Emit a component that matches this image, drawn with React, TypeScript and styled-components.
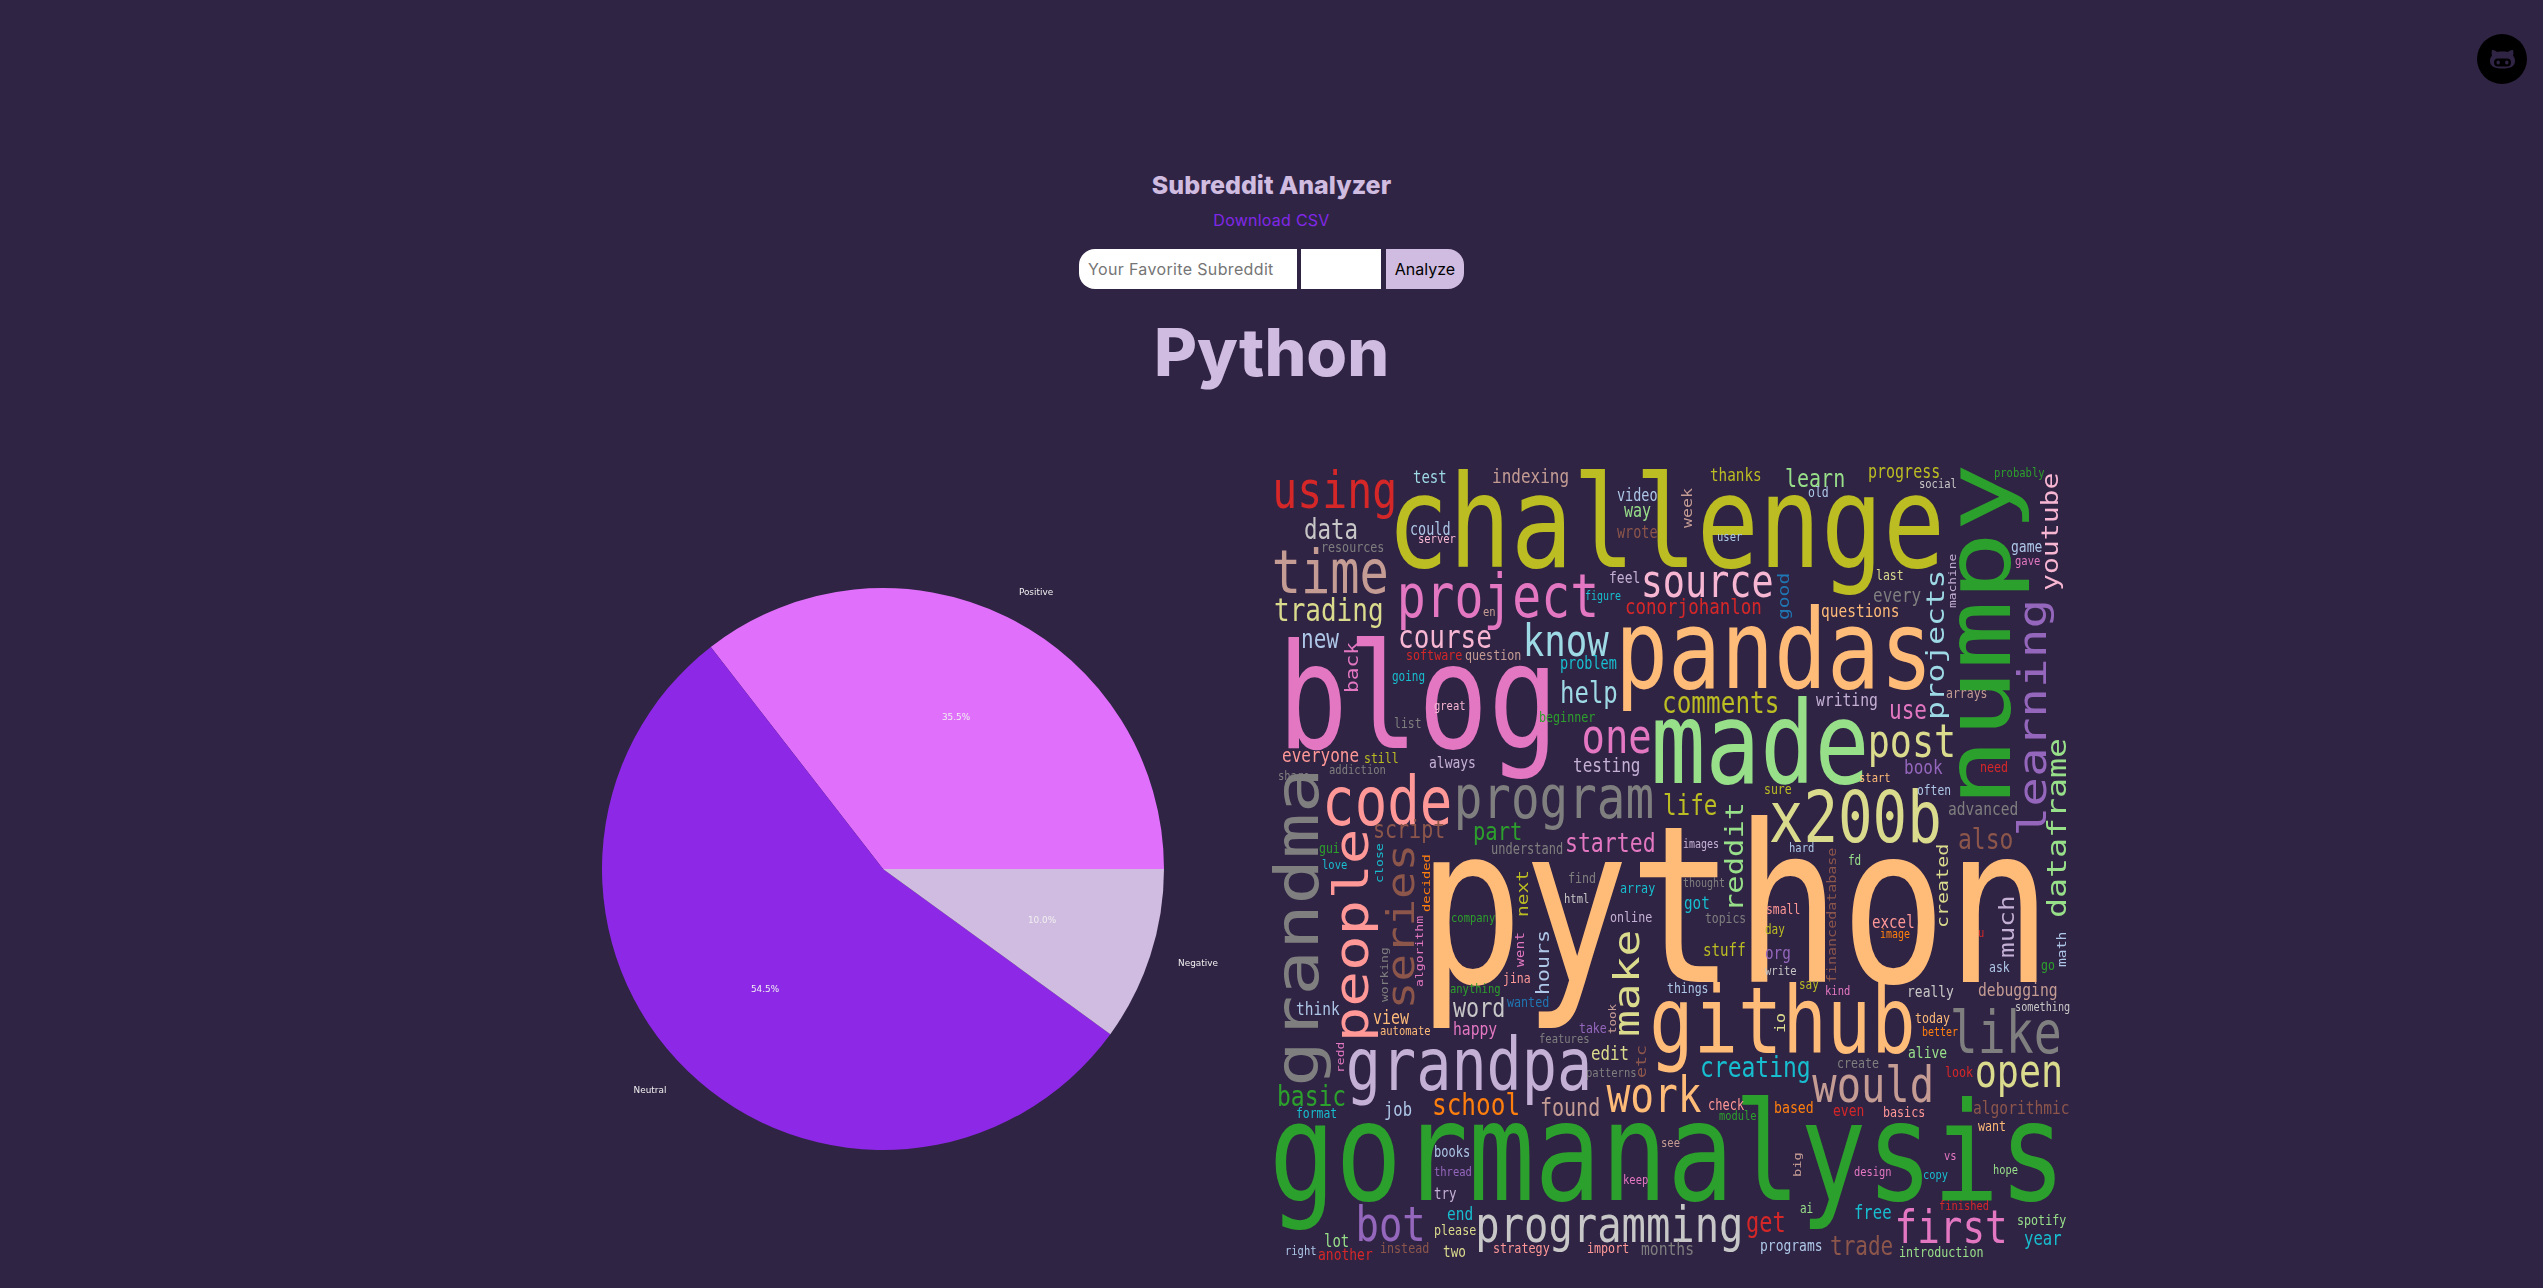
import styled, { createGlobalStyle } from "styled-components"

const GlobalStyle = createGlobalStyle`
  body {
    margin: 0;
    background: #302444;
    font-family: Inter, "Noto Sans", sans-serif;
  }
`

const Page = styled.div`
  position: relative;
  min-height: 1288px;
  padding-top: 167px;
  box-sizing: border-box;
  display: flex;
  flex-direction: column;
  align-items: center;
`

const GithubLink = styled.a`
  position: absolute;
  top: 34px;
  right: 16px;
  width: 50px;
  height: 50px;
  border-radius: 50%;
  background: #000;
  display: flex;
  align-items: center;
  justify-content: center;
  filter: blur(0.6px);
`

const Title = styled.h2`
  margin: 0;
  font-size: 25px;
  line-height: 36px;
  font-weight: 800;
  color: #d0bce0;
`

const DownloadLink = styled.a`
  margin-top: 5px;
  font-size: 16px;
  line-height: 24px;
  letter-spacing: 0.25px;
  color: #8028e8;
  text-decoration: none;
`

const SearchForm = styled.form`
  display: flex;
  gap: 4px;
  margin-top: 17px;
`

const TextInput = styled.input<{ $w: number; $rounded?: boolean }>`
  width: ${(p) => p.$w}px;
  height: 40px;
  box-sizing: border-box;
  padding: 0 9px;
  border: none;
  outline: none;
  background: #fff;
  border-radius: ${(p) => (p.$rounded ? "16px 0 0 16px" : "0")};
  font-family: inherit;
  font-size: 16px;
  letter-spacing: 0.35px;
  &::placeholder {
    color: #757575;
  }
`

const AnalyzeButton = styled.button`
  width: 78px;
  height: 40px;
  margin-left: 1px;
  padding: 0;
  border: none;
  border-radius: 0 16px 16px 0;
  background: #d0bce0;
  color: #000;
  font-family: inherit;
  font-size: 16px;
`

const SubredditName = styled.h1`
  margin: 15px 0 0;
  font-size: 66px;
  line-height: 96px;
  font-weight: 800;
  color: #d0bce0;
`

const Charts = styled.div`
  display: flex;
  justify-content: center;
  margin-top: 60px;
`

const ChartImage = styled.svg`
  display: block;
  width: 805px;
  height: 805px;
  filter: blur(0.45px);
`

const PieLabel = styled.text`
  font-family: "DejaVu Sans", sans-serif;
  font-size: 8.9px;
  fill: #f0f0f0;
  text-anchor: middle;
  dominant-baseline: central;
`

const CloudWord = styled.text<{ $color: string }>`
  font-family: "DejaVu Sans Mono", monospace;
  fill: ${(p) => p.$color};
`

const RED = "#d62728"
const OLIVE = "#bcbd22"
const CYAN = "#17becf"
const LCYAN = "#9edae5"
const BLUE = "#1f77b4"
const LBLUE = "#aec7e8"
const GREEN = "#2ca02c"
const LGREEN = "#98df8a"
const PINK = "#e377c2"
const LPINK = "#f7b6d2"
const PEACH = "#ffbb78"
const ORANGE = "#ff7f0e"
const GREY = "#7f7f7f"
const LGREY = "#c7c7c7"
const TAN = "#c49c94"
const BROWN = "#8c564b"
const PURPLE = "#9467bd"
const LPURPLE = "#c5b0d5"
const KHAKI = "#dbdb8d"
const SALMON = "#ff9896"

// text, x, y, font size, colour, vertical
type Word = [string, number, number, number, string, boolean?]

// x/y are where the word starts on the page, baseline
const WORDS: Word[] = [
  ["challenge", 1395, 567, 99.6, OLIVE],
  ["using", 1275, 508, 39, RED],
  ["test", 1412, 483, 14, LCYAN],
  ["indexing", 1491, 483, 16, TAN],
  ["video", 1616, 501, 13.5, LBLUE],
  ["way", 1623, 517, 15, LGREEN],
  ["wrote", 1616, 538, 13.5, BROWN],
  ["data", 1303, 539, 22.5, LGREY],
  ["resources", 1320, 552, 11.7, GREY],
  ["could", 1409, 535, 13.5, LBLUE],
  ["server", 1417, 543, 10.5, LPINK],
  ["time", 1275, 593, 45, TAN],
  ["trading", 1273, 621, 26, KHAKI],
  ["project", 1400, 617, 46, PINK],
  ["en", 1482, 616, 10.5, TAN],
  ["feel", 1608, 583, 13, LPURPLE],
  ["source", 1643, 597, 35, LPINK],
  ["figure", 1584, 600, 10, CYAN],
  ["conorjohanlon", 1624, 614, 17.5, RED],
  ["new", 1300, 648, 21, LBLUE],
  ["course", 1397, 648, 26, LPINK],
  ["know", 1525, 656, 33, LCYAN],
  ["software", 1405, 660, 11.7, RED],
  ["question", 1464, 660, 11.7, TAN],
  ["problem", 1559, 669, 13.5, CYAN],
  ["back", 1357, 693, 17, PINK, true],
  ["going", 1391, 681, 11, CYAN],
  ["help", 1559, 703, 24, LCYAN],
  ["blog", 1287, 748, 108, PINK],
  ["great", 1433, 710, 10.5, LPINK],
  ["list", 1393, 728, 11.5, GREY],
  ["beginner", 1538, 722, 11.7, GREEN],
  ["one", 1584, 753, 35, PINK],
  ["everyone", 1281, 762, 16, SALMON],
  ["still", 1363, 763, 11.5, OLIVE],
  ["always", 1428, 768, 13, LPURPLE],
  ["testing", 1572, 772, 16, LPURPLE],
  ["addiction", 1328, 774, 10.5, GREY],
  ["share", 1277, 780, 10.5, GREY],
  ["code", 1326, 825, 50, SALMON],
  ["program", 1457, 818, 45.5, GREY],
  ["script", 1372, 838, 20, BROWN],
  ["part", 1472, 840, 20.5, GREEN],
  ["understand", 1490, 854, 12, GREY],
  ["started", 1564, 852, 21.5, PINK],
  ["gui", 1318, 853, 11.5, GREEN],
  ["close", 1382, 883, 10.6, CYAN, true],
  ["grandma", 1317, 1080, 58, GREY, true],
  ["thanks", 1709, 481, 14.3, OLIVE],
  ["learn", 1784, 487, 20, LGREEN],
  ["progress", 1867, 478, 15, OLIVE],
  ["probably", 1993, 477, 10.5, GREEN],
  ["social", 1918, 488, 10.5, LGREY],
  ["old", 1807, 497, 11.5, LBLUE],
  ["user", 1716, 541, 10.5, LBLUE],
  ["week", 1691, 528, 13.3, TAN, true],
  ["numpy", 2009, 797, 86, GREEN, true],
  ["youtube", 2057, 591, 22.5, LPINK, true],
  ["game", 2010, 552, 13, LBLUE],
  ["gave", 2014, 565, 10.5, PINK],
  ["machine", 1955, 608, 10.3, LPURPLE, true],
  ["good", 1788, 620, 15.7, BLUE, true],
  ["last", 1875, 580, 11.5, KHAKI],
  ["every", 1872, 602, 16, GREY],
  ["projects", 1943, 720, 25, LCYAN, true],
  ["questions", 1820, 617, 14.5, PEACH],
  ["pandas", 1622, 688, 83.6, PEACH],
  ["comments", 1661, 713, 24.4, OLIVE],
  ["writing", 1815, 706, 14.7, LPURPLE],
  ["arrays", 1945, 698, 11.5, TAN],
  ["use", 1888, 719, 21, PINK],
  ["learning", 2045, 832, 38, PURPLE, true],
  ["made", 1658, 783, 84, LGREEN],
  ["post", 1870, 757, 34, KHAKI],
  ["book", 1903, 774, 16, PURPLE],
  ["need", 1979, 772, 11.7, RED],
  ["start", 1858, 782, 10.5, PEACH],
  ["often", 1916, 795, 11.3, LBLUE],
  ["sure", 1763, 794, 11.5, OLIVE],
  ["life", 1662, 815, 22.6, OLIVE],
  ["x200b", 1773, 842, 54, KHAKI],
  ["advanced", 1947, 815, 14.6, GREY],
  ["also", 1957, 849, 23, BROWN],
  ["images", 1682, 848, 10, LPURPLE],
  ["hard", 1788, 852, 10.5, LBLUE],
  ["fd", 1847, 865, 11, LGREEN],
  ["dataframe", 2065, 918, 26.6, LGREEN, true],
  ["reddit", 1742, 912, 24.4, LGREEN, true],
  ["financedatabase", 1835, 983, 12, BROWN, true],
  ["created", 1947, 928, 16, KHAKI, true],
  ["python", 1432, 982, 167, PEACH],
  ["love", 1321, 869, 10.5, CYAN],
  ["people", 1367, 1037, 45, SALMON, true],
  ["series", 1413, 1005, 34.8, BROWN, true],
  ["decided", 1429, 912, 11, ORANGE, true],
  ["algorithm", 1422, 987, 10.5, PINK, true],
  ["working", 1387, 1002, 10.4, GREY, true],
  ["next", 1527, 917, 15.6, OLIVE, true],
  ["company", 1450, 922, 10.5, GREEN],
  ["find", 1567, 883, 11.7, GREY],
  ["html", 1563, 903, 10.5, LGREY],
  ["array", 1619, 893, 11.7, CYAN],
  ["online", 1609, 922, 11.7, LPURPLE],
  ["went", 1523, 967, 11.6, PINK, true],
  ["hours", 1548, 995, 17.3, LBLUE, true],
  ["make", 1638, 1033, 33, KHAKI, true],
  ["github", 1655, 1053, 70, PEACH],
  ["jina", 1502, 983, 11.5, SALMON],
  ["anything", 1449, 993, 10.5, GREEN],
  ["wanted", 1506, 1007, 11.7, BLUE],
  ["think", 1295, 1015, 14.5, LBLUE],
  ["word", 1452, 1017, 21.8, LGREY],
  ["view", 1372, 1024, 15, PEACH],
  ["automate", 1379, 1035, 10.5, PEACH],
  ["happy", 1452, 1035, 14.7, PINK],
  ["take", 1578, 1033, 11.5, PURPLE],
  ["took", 1615, 1034, 10, TAN, true],
  ["features", 1538, 1043, 10.5, GREY],
  ["redd", 1343, 1073, 10.4, PINK, true],
  ["grandpa", 1350, 1090, 56, LPURPLE],
  ["edit", 1590, 1060, 15.8, KHAKI],
  ["patterns", 1585, 1077, 10.5, GREY],
  ["etc", 1645, 1078, 14.6, BROWN, true],
  ["work", 1609, 1112, 36.6, PEACH],
  ["basic", 1276, 1106, 23, GREEN],
  ["format", 1295, 1118, 11.4, CYAN],
  ["job", 1383, 1116, 15.5, LBLUE],
  ["school", 1431, 1115, 24.4, ORANGE],
  ["found", 1539, 1116, 20, TAN],
  ["gormanalysis", 1278, 1200, 107.5, GREEN],
  ["see", 1660, 1147, 10.5, TAN],
  ["books", 1433, 1157, 12, LBLUE],
  ["thread", 1433, 1176, 10.5, PURPLE],
  ["keep", 1622, 1184, 10.5, PINK],
  ["try", 1433, 1199, 12.5, LPURPLE],
  ["bot", 1358, 1241, 35, PURPLE],
  ["end", 1446, 1220, 14.5, CYAN],
  ["programming", 1478, 1242, 39.4, LGREY],
  ["please", 1433, 1235, 11.7, KHAKI],
  ["lot", 1323, 1247, 14, LGREEN],
  ["right", 1284, 1255, 10.5, LBLUE],
  ["another", 1317, 1260, 13, RED],
  ["instead", 1379, 1253, 11.7, BROWN],
  ["two", 1442, 1257, 12.7, KHAKI],
  ["strategy", 1492, 1253, 11.8, SALMON],
  ["import", 1586, 1253, 11.7, SALMON],
  ["months", 1640, 1255, 14.7, GREY],
  ["thought", 1682, 887, 10, GREY],
  ["got", 1683, 909, 14.3, CYAN],
  ["topics", 1704, 923, 11.4, GREY],
  ["small", 1765, 914, 11.4, SALMON],
  ["day", 1764, 934, 11, OLIVE],
  ["stuff", 1702, 956, 14.2, OLIVE],
  ["org", 1764, 959, 14.3, PURPLE],
  ["write", 1764, 975, 10.5, LGREY],
  ["excel", 1871, 928, 14.2, SALMON],
  ["image", 1879, 938, 10, ORANGE],
  ["much", 2013, 958, 20.8, LPURPLE, true],
  ["u", 1977, 937, 10.5, RED],
  ["math", 2065, 967, 11.8, LBLUE, true],
  ["ask", 1988, 972, 11.5, LBLUE],
  ["go", 2040, 970, 11.5, GREEN],
  ["things", 1666, 993, 11.5, LBLUE],
  ["say", 1798, 989, 11, OLIVE],
  ["kind", 1824, 995, 10.5, PINK],
  ["really", 1906, 997, 13, LGREY],
  ["debugging", 1977, 996, 14.7, TAN],
  ["something", 2014, 1011, 10.2, LGREY],
  ["io", 1784, 1033, 13.3, KHAKI, true],
  ["today", 1914, 1023, 11.6, PEACH],
  ["better", 1921, 1036, 10, ORANGE],
  ["like", 1953, 1053, 43, GREY],
  ["alive", 1907, 1058, 13, LGREEN],
  ["creating", 1699, 1077, 23, CYAN],
  ["create", 1836, 1068, 11.6, GREY],
  ["would", 1815, 1102, 38, TAN],
  ["look", 1944, 1077, 11.7, RED],
  ["open", 1977, 1087, 34, KHAKI],
  ["check", 1707, 1110, 12, SALMON],
  ["module", 1718, 1120, 10.4, GREEN],
  ["based", 1773, 1113, 13.2, ORANGE],
  ["even", 1832, 1116, 13, RED],
  ["basics", 1882, 1117, 11.7, SALMON],
  ["algorithmic", 1972, 1114, 14.6, BROWN],
  ["want", 1977, 1131, 11.7, PEACH],
  ["big", 1800, 1177, 11, TAN, true],
  ["vs", 1943, 1160, 10.5, PINK],
  ["design", 1853, 1176, 10.4, PINK],
  ["copy", 1922, 1179, 10.4, CYAN],
  ["hope", 1992, 1174, 10.4, LGREEN],
  ["ai", 1799, 1213, 11, LGREEN],
  ["free", 1853, 1219, 15.6, CYAN],
  ["first", 1897, 1243, 35.3, PINK],
  ["finished", 1938, 1210, 10.4, RED],
  ["get", 1745, 1232, 22, RED],
  ["spotify", 2016, 1225, 11.7, LGREEN],
  ["year", 2023, 1245, 15.6, CYAN],
  ["programs", 1759, 1251, 13, LBLUE],
  ["trade", 1829, 1255, 21, BROWN],
  ["introduction", 1898, 1257, 11.7, LGREEN],
]

const CLOUD_X = 1271
const CLOUD_Y = 460
const CLOUD_STRETCH = 1.25

function WordCloud() {
  return (
    <ChartImage viewBox={`0 0 805 ${805 / CLOUD_STRETCH}`} preserveAspectRatio="none">
      {WORDS.map(([text, x, y, size, color, vertical]) => {
        // sizes were read off the ink width, side bearings make the real em a bit bigger
        const n = text.length
        const big = size >= 30
        const fontSize = big ? (size * n) / (n - 0.3) : size
        const bearing = big ? fontSize * 0.09 : 0
        const cx = vertical ? x - CLOUD_X : x - CLOUD_X - bearing
        const cy = (vertical ? y + bearing * CLOUD_STRETCH - CLOUD_Y : y - CLOUD_Y) / CLOUD_STRETCH
        return (
          <CloudWord
            key={text}
            $color={color}
            x={cx}
            y={cy}
            fontSize={fontSize}
            transform={vertical ? `rotate(-90 ${cx} ${cy})` : undefined}
          >
            {text}
          </CloudWord>
        )
      })}
    </ChartImage>
  )
}

const PIE_R = 281
const PIE_CX = 416
const PIE_CY = 409

const SLICES = [
  { label: "Positive", pct: 35.5, color: "#e070fb", labelAt: [569, 132], pctAt: [489, 257] },
  { label: "Neutral", pct: 54.5, color: "#8d29e6", labelAt: [183, 630], pctAt: [298, 529] },
  { label: "Negative", pct: 10.0, color: "#d0bce0", labelAt: [731, 503], pctAt: [575, 460] },
]

function slicePath(from: number, to: number) {
  const rad = (a: number) => (a * Math.PI) / 180
  const x1 = PIE_CX + PIE_R * Math.cos(rad(from))
  const y1 = PIE_CY - PIE_R * Math.sin(rad(from))
  const x2 = PIE_CX + PIE_R * Math.cos(rad(to))
  const y2 = PIE_CY - PIE_R * Math.sin(rad(to))
  const large = to - from > 180 ? 1 : 0
  return `M${PIE_CX} ${PIE_CY} L${x1} ${y1} A${PIE_R} ${PIE_R} 0 ${large} 0 ${x2} ${y2} Z`
}

function PieChart() {
  let angle = 0
  return (
    <ChartImage viewBox="0 0 805 805">
      {SLICES.map((s) => {
        const from = angle
        angle += (s.pct / 100) * 360
        return <path key={s.label} d={slicePath(from, angle)} fill={s.color} />
      })}
      {SLICES.map((s) => (
        <g key={s.label}>
          <PieLabel x={s.labelAt[0]} y={s.labelAt[1]}>{s.label}</PieLabel>
          <PieLabel x={s.pctAt[0]} y={s.pctAt[1]}>{s.pct.toFixed(1)}%</PieLabel>
        </g>
      ))}
    </ChartImage>
  )
}

export default function App() {
  return (
    <Page>
      <GlobalStyle />
      <GithubLink href="#">
        <svg width="25" height="20" viewBox="0 0 25 20">
          <path
            d="M2 1 C3.5 0.5 6 2 7.5 3 C10 2.4 15 2.4 17.5 3 C19 2 21.5 0.5 23 1 C23.5 3 23.5 5 23 6.5 C24.5 8.5 25 10 25 12 C25 17 21 19.5 12.5 19.5 C4 19.5 0 17 0 12 C0 10 0.5 8.5 2 6.5 C1.5 5 1.5 3 2 1 Z"
            fill="#302444"
          />
          <rect x="4" y="9.5" width="17" height="8" rx="4" fill="#000" />
          <ellipse cx="8.2" cy="13.5" rx="1.7" ry="1.9" fill="#302444" />
          <ellipse cx="16.8" cy="13.5" rx="1.7" ry="1.9" fill="#302444" />
        </svg>
      </GithubLink>
      <Title>Subreddit Analyzer</Title>
      <DownloadLink href="#">Download CSV</DownloadLink>
      <SearchForm>
        <TextInput $w={218} $rounded placeholder="Your Favorite Subreddit" />
        <TextInput $w={80} />
        <AnalyzeButton type="button">Analyze</AnalyzeButton>
      </SearchForm>
      <SubredditName>Python</SubredditName>
      <Charts>
        <PieChart />
        <WordCloud />
      </Charts>
    </Page>
  )
}
